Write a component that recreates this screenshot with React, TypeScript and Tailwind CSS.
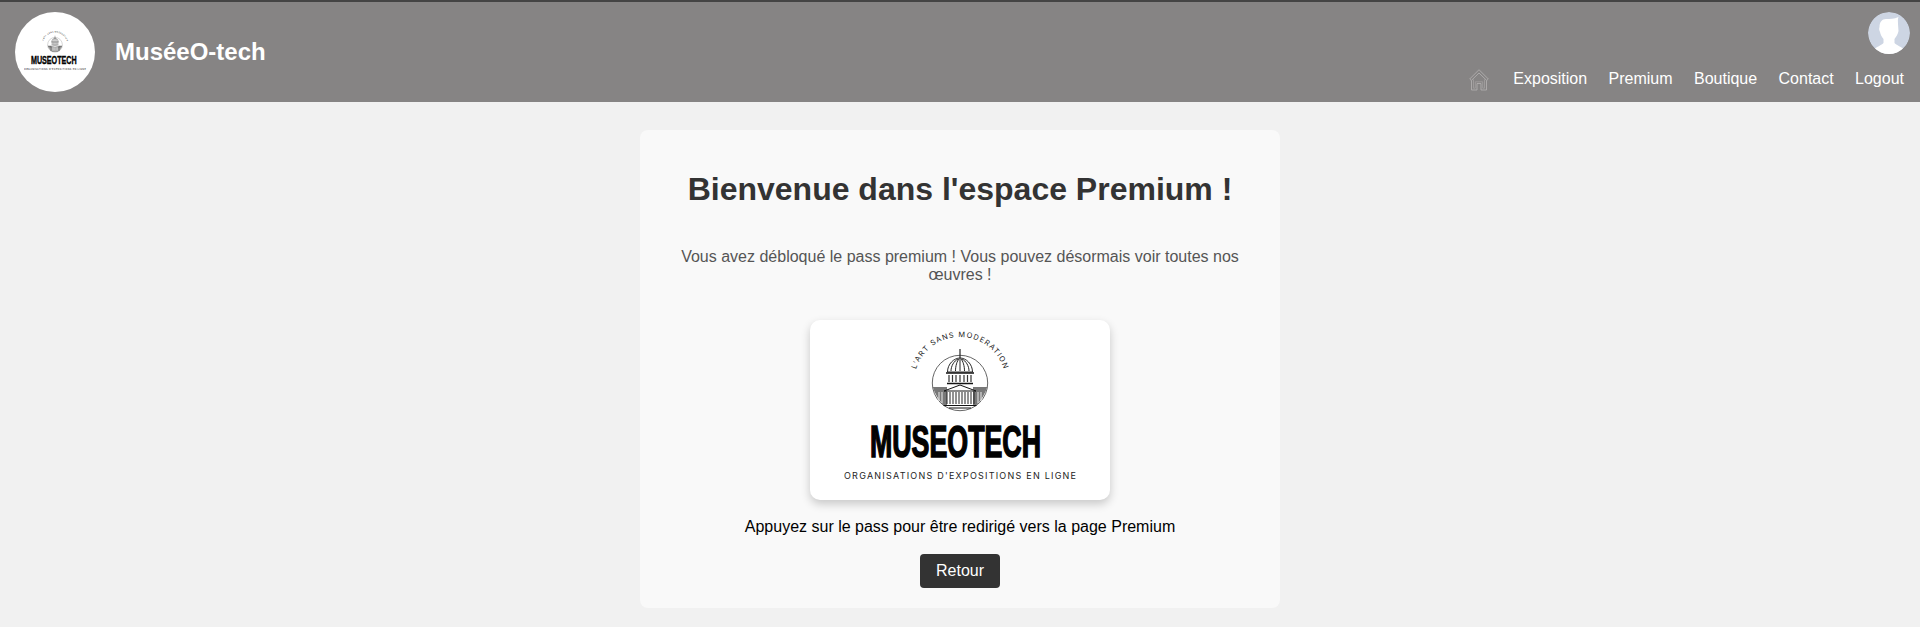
const Logo = ({ id, className }: { id: string; className: string }) => {
    return (
        <svg viewBox="0 0 300 180" className={`opacity-[0.99] ${className}`} fill="none">
            <defs>
                <path id={id} d="M 104.7 55 A 46 46 0 0 1 195.3 55" />
            </defs>
            <text fontFamily="Inter, sans-serif" fontSize="7.4" fill="#222">
                <textPath href={`#${id}`} startOffset="6" textLength="116" lengthAdjust="spacing">
                    L'ART SANS MODERATION
                </textPath>
            </text>
            <circle cx="150" cy="63" r="27.7" stroke="#222" strokeWidth="0.7" />
            <path d="M122.7 67 H137 V85 H133.5 Q126 77 122.7 67 Z M177.3 67 H163 V85 H166.5 Q174 77 177.3 67 Z" fill="#777" />
            <path d="M129 72 V81 M132 72 V83 M168 72 V83 M171 72 V81" stroke="#eee" strokeWidth="1" />
            <path d="M150 29 V38" stroke="#222" strokeWidth="1.2" />
            <path d="M137.5 52 C137.5 44 144 38 150 38 C156 38 162.5 44 162.5 52 Z" fill="#fff" stroke="#111" strokeWidth="0.9" />
            <path d="M141 51 C141 46 144 41 148 39 M145.5 51 C145.5 46 147 41 149 39 M150 51 V38 M154.5 51 C154.5 46 153 41 151 39 M159 51 C159 46 156 41 152 39" stroke="#222" strokeWidth="1" />
            <path d="M136 53 H164 M137 63.5 H163" stroke="#111" strokeWidth="1.3" />
            <path d="M139 55 V62 M142.5 55 V62 M146 55 V62 M150 55 V62 M154 55 V62 M157.5 55 V62 M161 55 V62" stroke="#333" strokeWidth="1.2" />
            <path d="M134 71 L150 65 L166 71 Z" fill="#fff" stroke="#111" strokeWidth="1" />
            <path d="M137 72 V84 M140 72 V84 M143 72 V84 M146 72 V84 M149 72 V84 M152 72 V84 M155 72 V84 M158 72 V84 M161 72 V84 M164 72 V84" stroke="#222" strokeWidth="1" />
            <path d="M133.5 85.5 H166.5 M139 88 H161" stroke="#111" strokeWidth="1.2" />
            <text x="60" y="136.5" fontFamily="'Liberation Sans', sans-serif" fontWeight="700" fontSize="44" fill="#000" stroke="#000" strokeWidth="1.6" textLength="171" lengthAdjust="spacingAndGlyphs">
                MUSEOTECH
            </text>
            <text x="34" y="159" fontFamily="Inter, sans-serif" fontSize="9" fill="#222" textLength="232" lengthAdjust="spacing">
                ORGANISATIONS D'EXPOSITIONS EN LIGNE
            </text>
        </svg>
    )
}

const HomeIcon = () => {
    return (
        <svg viewBox="0 0 20 22" className="w-5 h-[22px]" fill="none" stroke="#b0aeae" strokeWidth="0.9">
            <path d="M10 0.7 L0.7 10 L2.3 11.5 L10 4 L17.7 11.5 L19.3 10 Z" />
            <path d="M2.5 11.5 V21 H8 V14.5 H12 V21 H17.5 V11.5" />
            <path d="M4.5 10.5 V19.2 H6.3 V12.8 H13.7 V19.2 H15.5 V10.5" stroke="#a09e9e" />
        </svg>
    )
}

const Avatar = () => {
    return (
        <svg viewBox="0 0 42 42" className="w-[42px] h-[42px] rounded-full">
            <circle cx="21" cy="21" r="21" fill="#cdd5e3" />
            <path d="M11.5 15 C11.5 10 14 7 18 7 C22 7 26 7 30.5 5 C29.5 7.5 30 9 30 12 L30.5 19 C30 22 28 25 26.5 27 L26.5 31 C28 33 34 35 37 38 L33 42 H9 L5 38 C8 35 14 33 15.5 31 L15.5 27 C13.5 25 12.5 22 12 20 C11 18 11 16.5 11.5 15 Z" fill="#fff" />
        </svg>
    )
}

const links = ["Exposition", "Premium", "Boutique", "Contact", "Logout"]

const App = () => {
    return (
        <div className="min-h-screen bg-[#f1f1f1] font-['Liberation_Sans',Arial,sans-serif]">
            <header className="flex justify-between h-[102px] bg-[#868484] border-t-2 border-[#444444]">
                <div className="flex items-center pl-[15px] gap-5">
                    <div className="flex items-center justify-center w-20 h-20 rounded-full bg-white overflow-hidden">
                        <Logo id="arc-small" className="w-20 shrink-0" />
                    </div>
                    <span className="text-2xl font-bold leading-7 text-white">MuséeO-tech</span>
                </div>
                <div className="flex flex-col items-end pt-[10px] pr-[10px]">
                    <Avatar />
                    <nav className="flex items-center gap-[21.4px] mt-[12px] pr-[6px] text-base leading-[18px] text-white">
                        <a className="mr-[3px] mt-[3px]">
                            <HomeIcon />
                        </a>
                        {links.map((link) => (
                            <a key={link}>{link}</a>
                        ))}
                    </nav>
                </div>
            </header>

            <main className="flex flex-col items-center w-[640px] mx-auto mt-7 px-5 pt-[41px] pb-5 rounded-lg bg-[#f9f9f9] text-center">
                <h1 className="text-[32px] leading-[37px] font-bold text-[#333333]">Bienvenue dans l'espace Premium !</h1>
                <p className="mt-10 text-base leading-[18px] text-[#555555]">
                    Vous avez débloqué le pass premium ! Vous pouvez désormais voir toutes nos œuvres !
                </p>
                <div className="mt-9 w-[300px] h-[180px] rounded-[10px] bg-white shadow-[0_4px_10px_rgba(0,0,0,0.2)]">
                    <Logo id="arc-pass" className="w-[300px] h-[180px]" />
                </div>
                <p className="mt-[18px] text-base leading-[18px] text-black">
                    Appuyez sur le pass pour être redirigé vers la page Premium
                </p>
                <button className="mt-[18px] w-20 h-[34px] rounded bg-[#333333] text-base text-white">Retour</button>
            </main>
        </div>
    )
}

export default App
